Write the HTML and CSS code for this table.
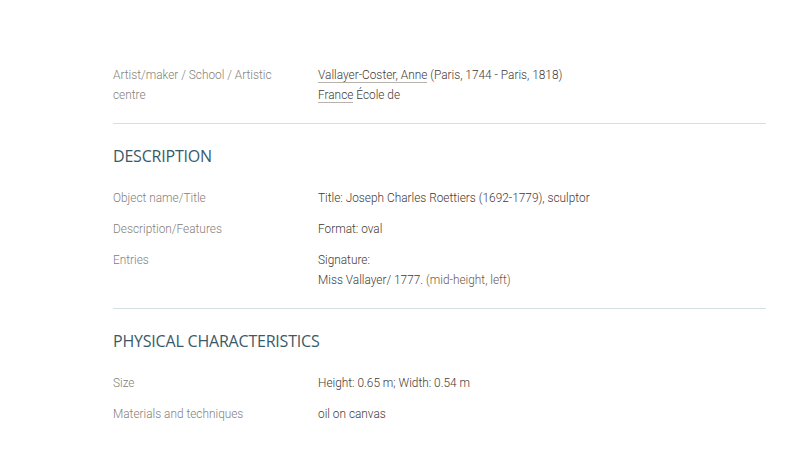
FILE: index.html
```html
<!DOCTYPE html>
<html lang="en">
<head>
<meta charset="utf-8">
<title>Record</title>
<link rel="stylesheet" href="styles.css">
</head>
<body>
<main class="record">
  <section class="section section--first">
    <div class="row">
      <div class="label">Artist/maker / School / Artistic centre</div>
      <div class="value">
        <div><a class="link" href="#">Vallayer-Coster, Anne</a> (Paris, 1744 - Paris, 1818)</div>
        <div><a class="link" href="#">France</a> École de</div>
      </div>
    </div>
  </section>
  <section class="section">
    <h2 class="heading">DESCRIPTION</h2>
    <div class="row">
      <div class="label">Object name/Title</div>
      <div class="value">Title: Joseph Charles Roettiers (1692-1779), sculptor</div>
    </div>
    <div class="row">
      <div class="label">Description/Features</div>
      <div class="value">Format: oval</div>
    </div>
    <div class="row">
      <div class="label">Entries</div>
      <div class="value">
        <div>Signature:</div>
        <div>Miss Vallayer/ 1777. <span class="note">(mid-height, left)</span></div>
      </div>
    </div>
  </section>
  <section class="section section--last">
    <h2 class="heading">PHYSICAL CHARACTERISTICS</h2>
    <div class="row">
      <div class="label">Size</div>
      <div class="value">Height: 0.65 m; Width: 0.54 m</div>
    </div>
    <div class="row">
      <div class="label">Materials and techniques</div>
      <div class="value">oil on canvas</div>
    </div>
  </section>
</main>
</body>
</html>
```
FILE: styles.css
```css
html, body {
  margin: 0;
  padding: 0;
  background: #ffffff;
}
body {
  font-family: Roboto, "Liberation Sans", sans-serif;
  font-weight: 300;
  font-size: 11.85px;
  line-height: 20px;
  color: #4a4540;
}
.record {
  width: 653px;
  margin-left: 113px;
  padding-top: 65px;
}
.section {
  padding-top: 22px;
  padding-bottom: 18px;
  border-bottom: 1px solid #d4e0e3;
}
.section--first {
  padding-top: 0;
}
.section--last {
  border-bottom: none;
}
.heading {
  margin: 0 0 22px 0;
  font-family: "Open Sans", sans-serif;
  font-weight: 400;
  font-size: 16px;
  line-height: 20px;
  letter-spacing: -0.2px;
  color: #3b5a69;
}
.row {
  display: grid;
  grid-template-columns: 205px 1fr;
  margin-bottom: 11px;
}
.row:last-child {
  margin-bottom: 0;
}
.label {
  color: #858079;
  padding-right: 30px;
}
.value {
  color: #3f3a35;
}
.link {
  color: inherit;
  text-decoration: none;
  border-bottom: 1px solid #b8b2ab;
}
.note {
  color: #6b5a48;
}
```
